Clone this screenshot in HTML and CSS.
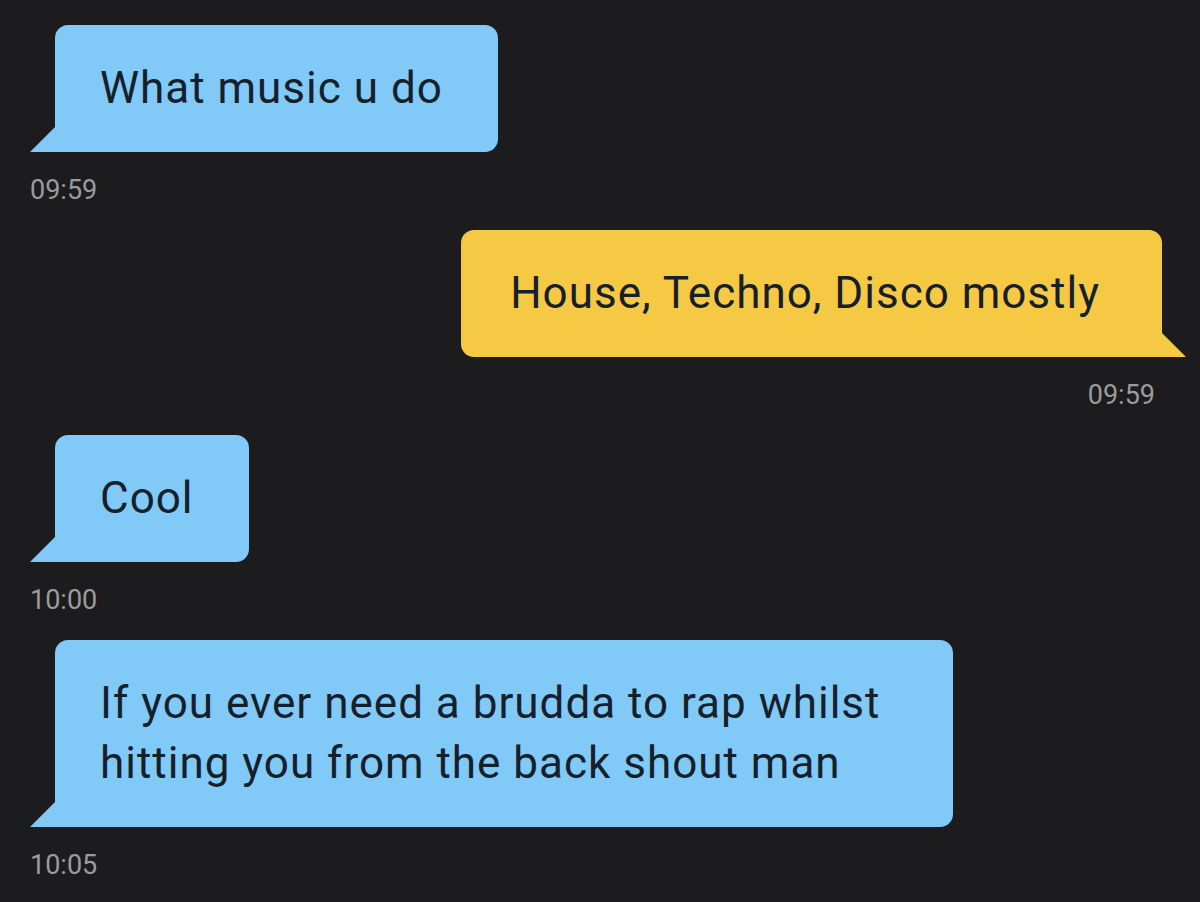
FILE: index.html
```html
<!DOCTYPE html>
<html>
<head>
    <title>Chat</title>
    <link rel="stylesheet" href="styles.css">
</head>
<body>
    <div class="chat">
        <div class="message incoming">
            <div class="bubble">What music u do</div>
            <div class="time">09:59</div>
        </div>
        <div class="message outgoing">
            <div class="bubble">House, Techno, Disco mostly</div>
            <div class="time">09:59</div>
        </div>
        <div class="message incoming">
            <div class="bubble">Cool</div>
            <div class="time">10:00</div>
        </div>
        <div class="message incoming">
            <div class="bubble wide">If you ever need a brudda to rap whilst hitting you from the back shout man</div>
            <div class="time">10:05</div>
        </div>
    </div>
</body>
</html>
```

FILE: styles.css
```css
body {
    margin: 0;
    padding: 0;
    background-color: #1c1c1e;
    font-family: 'Roboto', 'Liberation Sans', sans-serif;
}

.chat {
    display: flex;
    flex-direction: column;
    gap: 25px;
    padding-top: 25px;
}

.message {
    display: flex;
    flex-direction: column;
}

.incoming {
    align-items: flex-start;
}

.outgoing {
    align-items: flex-end;
}

.bubble {
    position: relative;
    font-size: 44px;
    letter-spacing: 1px;
    line-height: 60px;
    padding: 33px 55px 34px 45px;
    color: #15202b;
    border-radius: 13px;
}

.incoming .bubble {
    background-color: #81c9f6;
    margin-left: 55px;
    border-bottom-left-radius: 0;
}

.outgoing .bubble {
    background-color: #f6c945;
    margin-right: 38px;
    border-bottom-right-radius: 0;
    padding: 33px 62px 34px 49px;
}

.bubble.wide {
    width: 790px;
    padding-right: 63px;
}

/* the little tail at the bottom corner */
.bubble::before {
    content: "";
    position: absolute;
    bottom: 0;
    width: 25px;
    height: 25px;
    background-color: inherit;
}

.incoming .bubble::before {
    left: -25px;
    clip-path: polygon(100% 0, 100% 100%, 0 100%);
}

.outgoing .bubble::before {
    right: -24px;
    clip-path: polygon(0 0, 100% 100%, 0 100%);
}

.time {
    margin-top: 23px;
    font-size: 27px;
    line-height: 30px;
    color: #9b9b9d;
}

.incoming .time {
    margin-left: 30px;
}

.outgoing .time {
    margin-right: 45px;
}
```
